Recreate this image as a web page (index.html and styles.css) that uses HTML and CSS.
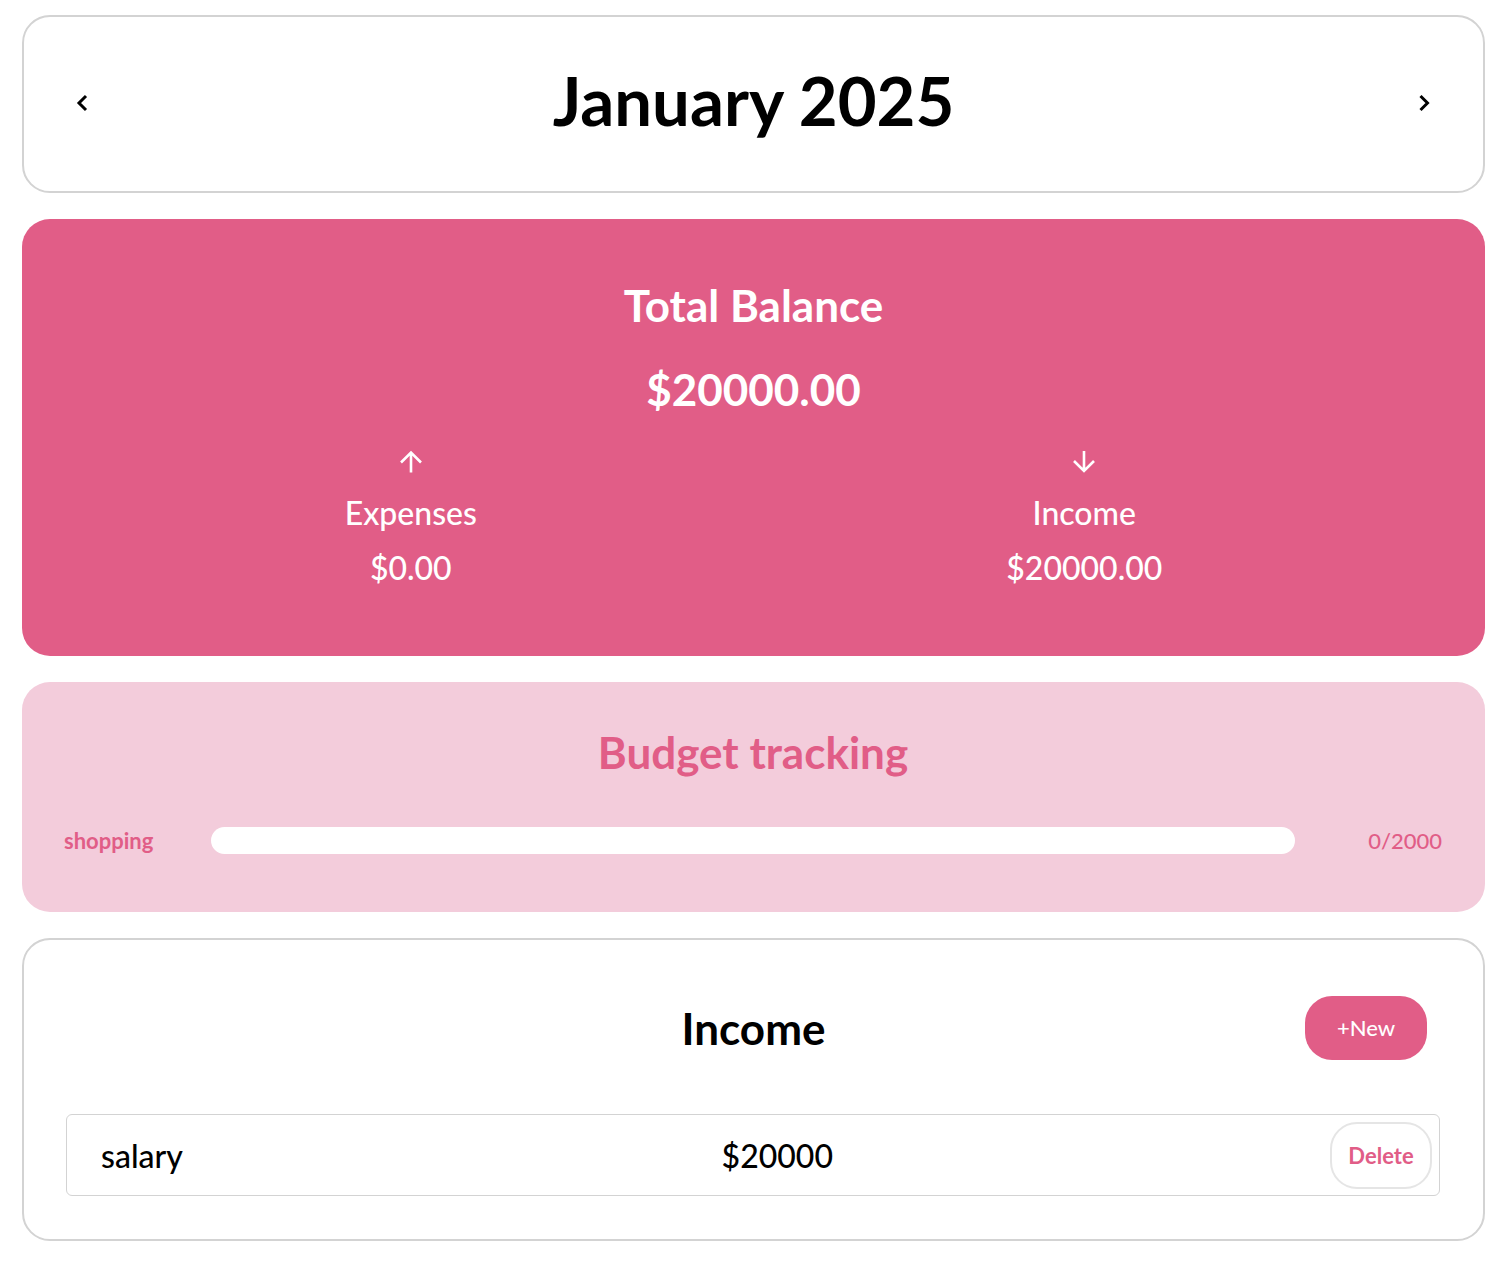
FILE: index.html
```html
<!DOCTYPE html>
<html lang="en">
<head>
<meta charset="utf-8">
<meta name="viewport" content="width=device-width, initial-scale=1">
<title>January 2025</title>
<link rel="stylesheet" href="styles.css">
</head>
<body>
<main class="page">
  <header class="card month">
    <button class="month-nav" type="button" aria-label="Previous month">
      <svg width="12" height="18" viewBox="0 0 12 18" aria-hidden="true"><path d="M10 2 3 9l7 7"/></svg>
    </button>
    <h1 class="month-title">January 2025</h1>
    <button class="month-nav" type="button" aria-label="Next month">
      <svg width="12" height="18" viewBox="0 0 12 18" aria-hidden="true"><path d="M1.500 2l7 7-7 7"/></svg>
    </button>
  </header>

  <section class="balance">
    <h2 class="heading">Total Balance</h2>
    <p class="heading">$20000.00</p>
    <div class="flows">
      <div class="flow">
        <svg class="arrow" width="24" height="24" viewBox="0 0 24 24" stroke-width="2.6" aria-hidden="true"><path d="M12 22.500V2.500M2 12.500l10-10 10 10"/></svg>
        <span>Expenses</span>
        <span>$0.00</span>
      </div>
      <div class="flow">
        <svg class="arrow" width="24" height="24" viewBox="0 0 24 24" stroke-width="2.6" aria-hidden="true"><path d="M12 1v20M2 11l10 10 10-10"/></svg>
        <span>Income</span>
        <span>$20000.00</span>
      </div>
    </div>
  </section>

  <section class="budget">
    <h2 class="heading">Budget tracking</h2>
    <div class="budget-row">
      <label class="budget-name" for="shopping">shopping</label>
      <progress class="budget-bar" id="shopping" value="0" max="2000"></progress>
      <span class="budget-value">0/2000</span>
    </div>
  </section>

  <section class="card income">
    <div class="income-head">
      <h2 class="heading">Income</h2>
      <button class="new" type="button">+New</button>
    </div>
    <ul class="entries">
      <li class="entry">
        <span>salary</span>
        <span>$20000</span>
        <button class="delete" type="button">Delete</button>
      </li>
    </ul>
  </section>
</main>
</body>
</html>
```
FILE: styles.css
```css
* {
  box-sizing: border-box;
}

body {
  margin: 0;
  background: #fff;
  color: #000;
  font-family: Lato, "Open Sans", sans-serif;
  font-size: 32px;
  font-weight: 500;
  line-height: 40px;
}

button {
  font: inherit;
  cursor: pointer;
}

h1, h2, p, ul {
  margin: 0;
  padding: 0;
}

.page {
  display: flex;
  flex-direction: column;
  gap: 26px;
  padding: 15px 21px 21px 22px;
}

.card {
  border: 2px solid #d3d3d3;
  border-radius: 28px;
}

.heading {
  font-size: 44px;
  font-weight: 700;
  line-height: 60px;
  text-align: center;
}

.month {
  display: flex;
  align-items: center;
  justify-content: space-between;
  padding: 41px 52px 43px;
}

.month-title {
  padding-bottom: 6px;
  font-size: 67px;
  font-weight: 700;
  line-height: 84px;
}

.month-nav {
  display: flex;
  padding: 0;
  border: 0;
  background: none;
}

.month-nav svg {
  fill: none;
  stroke: #000;
  stroke-width: 3;
}

.balance {
  padding: 56px 58px 68px;
  border-radius: 28px;
  background: #e15d87;
  color: #fff;
}

.balance .heading + .heading {
  margin-top: 24px;
}

.flows {
  display: flex;
  justify-content: space-around;
  margin-top: 31px;
}

.flow {
  display: flex;
  flex-direction: column;
  align-items: center;
  gap: 15px;
}

.arrow {
  margin-bottom: 4px;
  fill: none;
  stroke: #fff;
}

.budget {
  padding: 40px 43px 58px 42px;
  border-radius: 28px;
  background: #f3ccdb;
  color: #e15d87;
}

.budget-row {
  display: grid;
  grid-template-columns: 92px 1fr 92px;
  align-items: center;
  gap: 55px;
  margin-top: 45px;
  font-size: 22px;
  line-height: 27px;
}

.budget-name {
  font-weight: 700;
}

.budget-bar {
  width: 100%;
  height: 27px;
  border: 0;
  border-radius: 14px;
  overflow: hidden;
  background: #fff;
  appearance: none;
}

.budget-bar::-webkit-progress-bar {
  background: #fff;
}

.budget-bar::-webkit-progress-value {
  background: #e15d87;
}

.budget-value {
  text-align: right;
}

.income {
  padding: 56px 43px 43px 42px;
}

.income-head {
  display: grid;
  grid-template-columns: 1fr auto 1fr;
  align-items: center;
  padding: 0 13px 0 14px;
}

.income-head .heading {
  grid-column: 2;
}

.new {
  justify-self: end;
  width: 122px;
  height: 64px;
  border: 0;
  border-radius: 27px;
  background: #e15d87;
  color: #fff;
  font-size: 22px;
}

.entries {
  margin-top: 54px;
  list-style: none;
}

.entry {
  display: grid;
  grid-template-columns: 51fr 50fr auto;
  align-items: center;
  padding: 7px 7px 6px 34px;
  border: 1px solid #d3d3d3;
  border-radius: 6px;
}

.delete {
  width: 102px;
  height: 67px;
  padding: 0;
  border: 2px solid #e5e5e5;
  border-radius: 27px;
  background: #fff;
  color: #e15d87;
  font-size: 22px;
  font-weight: 700;
}
```
